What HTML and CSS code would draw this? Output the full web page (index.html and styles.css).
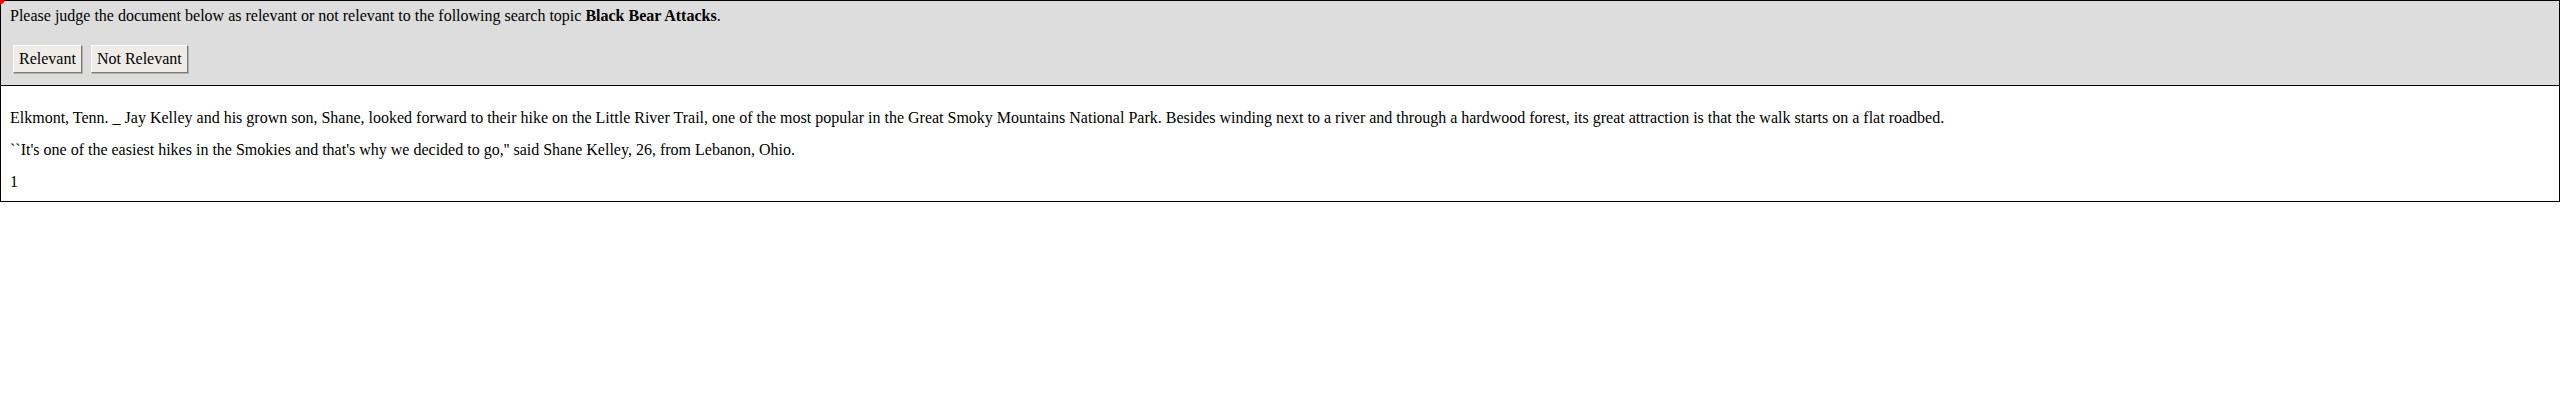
FILE: index.html
```html
<!DOCTYPE html>
<html>
<head>
<meta charset="utf-8">
<link rel="stylesheet" href="styles.css">
</head>
<body>
<div class="dot"></div>
<div class="panel">
  <div class="header">
    <p class="prompt">Please judge the document below as relevant or not relevant to the following search topic <b>Black Bear Attacks</b>.</p>
    <div class="actions">
      <button class="btn">Relevant</button>
      <button class="btn">Not Relevant</button>
    </div>
  </div>
  <div class="doc">
    <p>Elkmont, Tenn. _ Jay Kelley and his grown son, Shane, looked forward to their hike on the Little River Trail, one of the most popular in the Great Smoky Mountains National Park. Besides winding next to a river and through a hardwood forest, its great attraction is that the walk starts on a flat roadbed.</p>
    <p>``It's one of the easiest hikes in the Smokies and that's why we decided to go,'' said Shane Kelley, 26, from Lebanon, Ohio.</p>
    <p>1</p>
  </div>
</div>
</body>
</html>
```
FILE: styles.css
```css
html, body {
  margin: 0;
  padding: 0;
  background: #fff;
}
body {
  font-family: "Liberation Serif", "Times New Roman", serif;
  font-size: 16px;
  color: #000;
  position: relative;
}
.dot {
  position: absolute;
  left: -8px;
  top: -8px;
  width: 13px;
  height: 13px;
  border-radius: 50%;
  background: #f00;
  z-index: 2;
}
.panel {
  border: 1px solid #000;
}
.header {
  background: #ddd;
  border-bottom: 1px solid #000;
  padding: 6px 9px 12px;
}
.prompt {
  margin: 0 0 20px;
  line-height: 18px;
}
.actions {
  display: flex;
  gap: 9px;
  padding-left: 3px;
}
.btn {
  font-family: "Liberation Serif", "Times New Roman", serif;
  font-size: 16px;
  color: #000;
  background: #efece8;
  border: 1px solid;
  border-color: #fff #7a7a7a #7a7a7a #fff;
  box-shadow: 1px 1px 0 #b0b0b0;
  height: 28px;
  padding: 0 5px;
  line-height: 26px;
  border-radius: 0;
}
.doc {
  padding: 9px 9px 10px;
}
.doc p {
  margin: 14px 0;
  line-height: 18px;
}
.doc p:last-child {
  margin-bottom: 0;
}
```
